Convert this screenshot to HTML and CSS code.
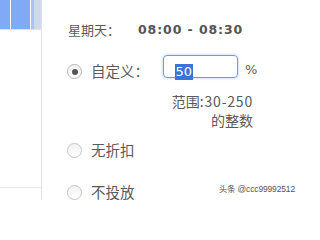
FILE: index.html
```html
<!DOCTYPE html>
<html>
<head>
<meta charset="utf-8">
<link rel="stylesheet" href="styles.css">
</head>
<body>
<div class="page">
  <aside class="side">
    <div class="cells">
      <div class="cell c1"></div>
      <div class="cell c2"></div>
      <div class="cell c3"></div>
      <div class="cell c4"></div>
    </div>
    <div class="side-fill"></div>
    <div class="side-line"></div>
  </aside>
  <main class="main">
    <div class="row time-row">
      <span class="label day">星期天：</span><span class="time">08:00 - 08:30</span>
    </div>
    <div class="row custom-row">
      <span class="radio checked"><span class="dot"></span></span>
      <span class="label opt-label custom-label">自定义：</span>
      <div class="input"><span class="sel">50</span></div>
      <span class="pct">%</span>
    </div>
    <div class="range">
      <div class="range-line">范围<span class="num">:30-250</span></div>
      <div class="range-line">的整数</div>
    </div>
    <div class="row opt opt1">
      <span class="radio"></span>
      <span class="label opt-label">无折扣</span>
    </div>
    <div class="row opt opt2">
      <span class="radio"></span>
      <span class="label opt-label">不投放</span>
    </div>
  </main>
  <div class="watermark">头条 @ccc99992512</div>
</div>
</body>
</html>
```
FILE: styles.css
```css
html, body {
  margin: 0;
  padding: 0;
  background: #fff;
}
.page {
  position: relative;
  width: 300px;
  height: 200px;
  overflow: hidden;
  display: flex;
  font-family: "Noto Sans CJK SC", "DejaVu Sans", sans-serif;
  color: #5a5a5a;
}
.side {
  width: 41px;
  flex: none;
  border-right: 1px solid #e2e2e2;
  display: flex;
  flex-direction: column;
}
.cells {
  height: 29px;
  display: flex;
  border-bottom: 1px solid #e4e4e4;
}
.cell { height: 100%; }
.c1 { width: 10px; background: #80a9f6; margin-right: 1px; }
.c2 { width: 19px; background: #80a9f6; margin-right: 1px; }
.c3 { width: 3px; background: #a9c3f2; }
.c4 { width: 7px; background: #cfd9ea; }
.side-fill { flex: 1; }
.side-line {
  height: 1px;
  background: #e6e6e6;
  margin-bottom: 12px;
}
.main {
  flex: 1;
  padding-left: 25px;
  display: flex;
  flex-direction: column;
}
.row {
  display: flex;
  align-items: flex-start;
}
.label {
  font-size: 12.5px;
  line-height: 20px;
  white-space: nowrap;
}
.day { font-size: 13px; }
.opt-label { font-size: 14.5px; }
.time-row {
  margin-top: 20px;
  height: 20px;
  padding-left: 1px;
}
.time {
  font-family: "DejaVu Sans", sans-serif;
  font-weight: bold;
  font-size: 12.5px;
  line-height: 20px;
  letter-spacing: 0.9px;
  color: #555;
  margin-left: 18px;
}
.custom-row {
  margin-top: 15px;
  height: 22px;
}
.radio {
  flex: none;
  width: 13px;
  height: 13px;
  border: 1px solid #c4c4c4;
  border-radius: 50%;
  background: linear-gradient(#f2f2f2, #fff);
  display: flex;
  align-items: center;
  justify-content: center;
  margin-right: 9px;
  box-sizing: content-box;
}
.radio.checked { border-color: #b5b5b5; }
.dot {
  width: 6px;
  height: 6px;
  border-radius: 50%;
  background: #555;
}
.custom-row .radio { margin-top: 9px; }
.custom-label { margin-top: 6px; }
.input {
  height: 20px;
  border: 1px solid #6c9de2;
  border-radius: 4px;
  box-shadow: 0 0 3px rgba(90, 145, 230, 0.55);
  margin-left: 14px;
  padding-left: 11px;
  padding-top: 1px;
  box-sizing: content-box;
  width: 62px;
}
.sel {
  display: inline-block;
  background: #3b73d8;
  color: #fff;
  font-family: "DejaVu Sans", sans-serif;
  font-size: 13px;
  line-height: 16px;
  padding: 0 0.5px;
}
.pct {
  font-family: "DejaVu Sans", sans-serif;
  font-size: 13px;
  line-height: 16px;
  margin-left: 7px;
  margin-top: 7px;
}
.range {
  margin-top: 15px;
  width: 186px;
  text-align: right;
}
.range-line {
  font-size: 14px;
  line-height: 19px;
}
.num { letter-spacing: 0.8px; }
.opt1 { margin-top: 10px; }
.opt2 { margin-top: 22px; }
.opt .radio { margin-top: 3px; }
.watermark {
  position: absolute;
  right: 5px;
  bottom: 6px;
  font-family: "Liberation Sans", "Noto Sans CJK SC", sans-serif;
  font-size: 8.5px;
  line-height: 10px;
  color: #555;
  letter-spacing: -0.15px;
  text-shadow: 0 0 2px #fff;
}
```
